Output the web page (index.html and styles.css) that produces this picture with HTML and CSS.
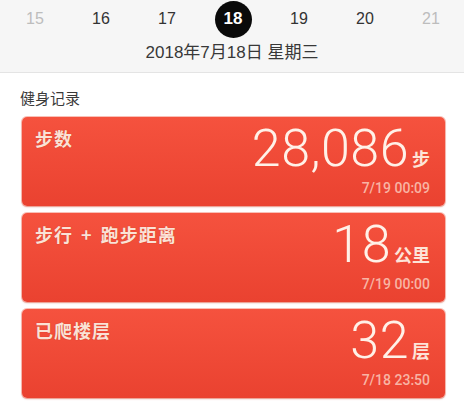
FILE: index.html
```html
<!DOCTYPE html>
<html lang="zh-CN">
<head>
<meta charset="utf-8">
<link rel="stylesheet" href="styles.css">
</head>
<body>
<header class="head">
  <div class="days">
    <span class="day faded">15</span>
    <span class="day">16</span>
    <span class="day">17</span>
    <span class="day"><span class="sel">18</span></span>
    <span class="day">19</span>
    <span class="day">20</span>
    <span class="day faded">21</span>
  </div>
  <div class="date">2018年7月18日 星期三</div>
</header>
<main class="main">
  <h2 class="section">健身记录</h2>
  <div class="card">
    <div class="title">步数</div>
    <div class="value"><span class="num">28,086</span><span class="unit">步</span></div>
    <div class="time">7/19 00:09</div>
  </div>
  <div class="card">
    <div class="title">步行 <span class="plus">+</span> 跑步距离</div>
    <div class="value"><span class="num">18</span><span class="unit">公里</span></div>
    <div class="time">7/19 00:00</div>
  </div>
  <div class="card">
    <div class="title">已爬楼层</div>
    <div class="value"><span class="num">32</span><span class="unit">层</span></div>
    <div class="time">7/18 23:50</div>
  </div>
</main>
</body>
</html>
```
FILE: styles.css
```css
* { box-sizing: border-box; }
html, body { margin: 0; padding: 0; }
body {
  background: #fff;
  font-family: "Liberation Sans", "Noto Sans CJK SC", sans-serif;
  width: 464px;
  height: 417px;
  overflow: hidden;
}
.head {
  background: #f6f6f6;
  border-bottom: 1px solid #e4e4e4;
  height: 73px;
}
.days {
  display: grid;
  grid-template-columns: repeat(7, 1fr);
  height: 38px;
  align-items: center;
  padding-left: 2px;
}
.day {
  display: flex;
  justify-content: center;
  align-items: center;
  font-size: 16px;
  color: #333;
}
.day.faded { color: #bdbdbd; }
.sel {
  width: 37px;
  height: 37px;
  border-radius: 50%;
  background: #0a0a0a;
  color: #fff;
  font-weight: 700;
  font-size: 17px;
  display: flex;
  align-items: center;
  justify-content: center;
}
.date {
  text-align: center;
  font-size: 17px;
  color: #383838;
  margin-top: 4px;
  line-height: 22px;
}
.main {
  padding: 0 19px 0 22px;
}
.section {
  margin: 0 0 0 -2px;
  padding: 16px 0 0 0;
  font-size: 15px;
  font-weight: 400;
  color: #3a3a3a;
  line-height: 20px;
  height: 44px;
}
.card {
  display: grid;
  grid-template-columns: 1fr auto;
  grid-template-rows: auto auto;
  background: linear-gradient(#f5523e, #ea4230);
  border-radius: 5px;
  box-shadow: 0 0 0 1px rgba(244, 120, 100, 0.45), 0 1px 2px rgba(160, 40, 20, 0.35);
  padding: 6px 15px 11px 13px;
  height: 89px;
  margin-bottom: 7px;
  color: #fde6da;
}
.title {
  grid-column: 1;
  grid-row: 1;
  font-family: "Noto Sans CJK SC", sans-serif;
  font-size: 18px;
  font-weight: 700;
  line-height: 20px;
  letter-spacing: 1px;
  margin-top: 5px;
  color: #fbe2d6;
  text-shadow: 0 0 1px rgba(120, 20, 10, 0.4);
}
.plus {
  margin: 0 3px;
}
.value {
  grid-column: 2;
  grid-row: 1;
  display: flex;
  align-items: baseline;
  justify-content: flex-end;
  line-height: 52px;
  height: 52px;
}
.num {
  font-family: Roboto, "Liberation Sans", sans-serif;
  font-weight: 300;
  font-size: 52px;
  color: #fff1e8;
  letter-spacing: 0.5px;
}
.unit {
  font-family: "Noto Sans CJK SC", sans-serif;
  font-weight: 700;
  font-size: 18px;
  margin-left: 3px;
  color: #fde4d8;
}
.time {
  grid-column: 2;
  grid-row: 2;
  text-align: right;
  font-family: Roboto, "Liberation Sans", sans-serif;
  font-weight: 500;
  font-size: 14px;
  line-height: 16px;
  margin-top: 5px;
  color: #f8b4a4;
}
```
